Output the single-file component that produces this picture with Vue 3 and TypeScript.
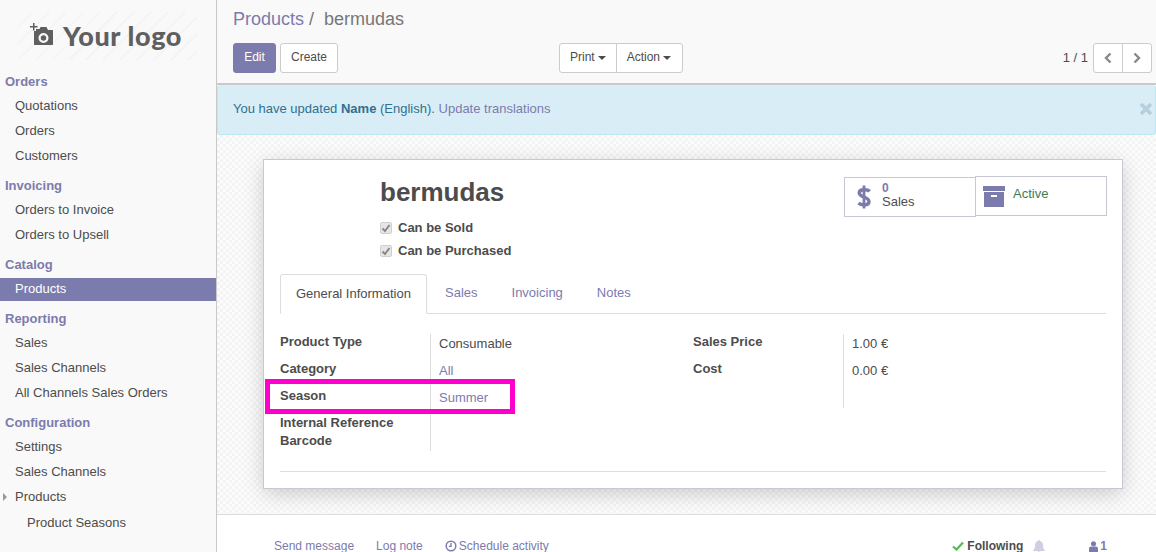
<script setup lang="ts">
interface MenuSection {
  title: string
  items: string[]
}

const sections: MenuSection[] = [
  { title: 'Orders', items: ['Quotations', 'Orders', 'Customers'] },
  { title: 'Invoicing', items: ['Orders to Invoice', 'Orders to Upsell'] },
  { title: 'Catalog', items: ['Products'] },
  { title: 'Reporting', items: ['Sales', 'Sales Channels', 'All Channels Sales Orders'] },
  { title: 'Configuration', items: ['Settings', 'Sales Channels'] }
]

const tabs = ['Sales', 'Invoicing', 'Notes']
</script>

<template>
  <div class="app">
    <aside class="sidebar">
      <div class="logo">
        <svg class="logo-icon" viewBox="0 0 23 22" width="23" height="22">
          <path d="M0 3h3V0h1.500v3h3v1.500h-3v3H3v-3H0z" fill="#5f5f5f" />
          <path fill-rule="evenodd" d="M4 8h2V6h3.500l1-2h6l1.500 3h4.500c.3 0 .5.200.5.500V21.500c0 .3-.2.500-.5.500H4.500c-.3 0-.5-.2-.5-.5zm9.500 2a5 5 0 1 0 0 10 5 5 0 0 0 0-10zm0 2.300a2.700 2.700 0 1 1 0 5.400 2.700 2.700 0 0 1 0-5.400z" fill="#5f5f5f" />
        </svg>
        <span class="logo-text">Your logo</span>
      </div>

      <nav>
        <div v-for="section in sections" :key="section.title" class="menu-section">
          <div class="menu-title">{{ section.title }}</div>
          <div
            v-for="item in section.items"
            :key="item"
            class="menu-item"
            :class="{ active: section.title === 'Catalog' }"
          >
            {{ item }}
          </div>
        </div>
        <div class="menu-item has-caret"><span class="caret-right"></span>Products</div>
        <div class="menu-item sub">Product Seasons</div>
      </nav>
    </aside>

    <main class="content">
      <header class="control-panel">
        <div class="breadcrumb">
          <a>Products</a><span class="sep">/</span><span class="current">bermudas</span>
        </div>
        <div class="toolbar">
          <div class="toolbar-left">
            <button class="btn primary">Edit</button>
            <button class="btn">Create</button>
          </div>
          <div class="btn-group">
            <button class="btn">Print<span class="caret"></span></button>
            <button class="btn action">Action<span class="caret"></span></button>
          </div>
          <div class="pager">
            <span class="pager-value">1 / 1</span>
            <div class="btn-group">
              <button class="btn icon-btn">
                <svg viewBox="0 0 10 12" width="10" height="12"><path d="M7.500 1.500 3 6l4.500 4.500" fill="none" stroke="#888" stroke-width="2.400" /></svg>
              </button>
              <button class="btn icon-btn">
                <svg viewBox="0 0 10 12" width="10" height="12"><path d="M2.500 1.500 7 6l-4.500 4.500" fill="none" stroke="#888" stroke-width="2.400" /></svg>
              </button>
            </div>
          </div>
        </div>
      </header>

      <div class="alert">
        <span>You have updated <b>Name</b> (English). <a>Update translations</a></span>
        <svg class="alert-close" viewBox="0 0 14 14" width="14" height="14"><path d="M2 2l10 10M12 2 2 12" fill="none" stroke="#b5cfdb" stroke-width="3.600" /></svg>
      </div>

      <section class="sheet-bg">
        <div class="sheet">
          <div class="head">
            <div class="title-block">
              <h1>bermudas</h1>
              <label class="check"><span class="box"><svg viewBox="0 0 10 10" width="10" height="10"><path d="M1.500 5.500 4 8l4.500-6" fill="none" stroke="#888" stroke-width="2" /></svg></span>Can be Sold</label>
              <label class="check"><span class="box"><svg viewBox="0 0 10 10" width="10" height="10"><path d="M1.500 5.500 4 8l4.500-6" fill="none" stroke="#888" stroke-width="2" /></svg></span>Can be Purchased</label>
            </div>
            <div class="stat-box">
              <div class="stat sales">
                <svg class="dollar" viewBox="0 0 14 26" width="14" height="26">
                  <path d="M12.500 7.500C11 5.500 2.200 4.500 2.200 9c0 4.500 9.800 3.500 9.800 8.500 0 4.500-8 4-10.500 1.500" fill="none" stroke="#7c7bad" stroke-width="3.400" />
                  <path d="M7 1.500v23" fill="none" stroke="#7c7bad" stroke-width="2.800" />
                </svg>
                <div class="stat-text"><b>0</b><span>Sales</span></div>
              </div>
              <div class="stat active-stat">
                <svg viewBox="0 0 22 21" width="22" height="21">
                  <path d="M0 0h22v5H0z" fill="#7c7bad" />
                  <path fill-rule="evenodd" d="M1 6h20v15H1zm7 3v2h6V9z" fill="#7c7bad" />
                </svg>
                <span class="active-label">Active</span>
              </div>
            </div>
          </div>

          <div class="tabs">
            <div class="tab current-tab">General Information</div>
            <a v-for="tab in tabs" :key="tab" class="tab">{{ tab }}</a>
          </div>

          <div class="groups">
            <div class="group left">
              <div class="row"><div class="label">Product Type</div><div class="value">Consumable</div></div>
              <div class="row"><div class="label">Category</div><div class="value link">All</div></div>
              <div class="row"><div class="label">Season</div><div class="value link">Summer</div></div>
              <div class="row short"><div class="label">Internal Reference</div><div class="value"></div></div>
              <div class="row short"><div class="label">Barcode</div><div class="value"></div></div>
              <div class="highlight"></div>
            </div>
            <div class="group right">
              <div class="row"><div class="label">Sales Price</div><div class="value">1.00 €</div></div>
              <div class="row"><div class="label">Cost</div><div class="value">0.00 €</div></div>
              <div class="row spacer"><div class="label"></div><div class="value"></div></div>
            </div>
          </div>
          <div class="rule"></div>
        </div>
      </section>

      <footer class="chatter">
        <div class="chatter-left">
          <a>Send message</a>
          <a>Log note</a>
          <a class="schedule">
            <svg viewBox="0 0 12 12" width="12" height="12"><circle cx="6" cy="6" r="4.800" fill="none" stroke="#7c7bad" stroke-width="1.500" /><path d="M6 3v3.300H3.800" fill="none" stroke="#7c7bad" stroke-width="1.300" /></svg>
            Schedule activity
          </a>
        </div>
        <div class="chatter-right">
          <span class="following">
            <svg viewBox="0 0 12 10" width="12" height="10"><path d="M1 5.500 4.500 8.500 11 1.500" fill="none" stroke="#5cb85c" stroke-width="2.300" /></svg>
            Following
          </span>
          <svg class="bell" viewBox="0 0 12 13" width="12" height="13"><path d="M6 0c.6 0 1 .4 1 1 2 .4 3 2 3 4 0 3 .5 4 2 5.500v.5H0v-.5C1.500 9 2 8 2 5c0-2 1-3.600 3-4 0-.6.4-1 1-1zM4.500 11.500h3a1.500 1.500 0 0 1-3 0z" fill="#d0cfe2" /></svg>
          <span class="followers">
            <svg viewBox="0 0 10 12" width="9" height="11"><circle cx="5" cy="3" r="2.800" fill="#7c7bad" /><path d="M0 12V8.500C0 7 1 6 2.500 6h5C9 6 10 7 10 8.500V12z" fill="#7c7bad" /></svg>
            1
          </span>
        </div>
      </footer>
    </main>
  </div>
</template>

<style>
html,
body {
  margin: 0;
  overflow: hidden;
}
</style>

<style scoped>
.app {
  display: flex;
  width: 1156px;
  height: 552px;
  overflow: hidden;
  font-family: "Liberation Sans", Arial, sans-serif;
  font-size: 13px;
  line-height: 18.57px;
  color: #4c4c4c;
  background: #fff;
}

a {
  color: #7c7bad;
}

/* sidebar */
.sidebar {
  flex: none;
  box-sizing: border-box;
  width: 217px;
  height: 552px;
  background: #f9f9f9;
  border-right: 1px solid #c8c8c8;
}

.logo {
  display: flex;
  align-items: center;
  gap: 10px;
  box-sizing: border-box;
  width: 180px;
  height: 48px;
  margin: 12px 0 9px 17px;
  padding: 0 0 0 13px;
  background: repeating-linear-gradient(135deg, #f9f9f9 0 10px, #f4f4f4 10px 12px);
}

.logo-icon {
  margin-top: -5px;
}

.logo-text {
  font-family: Lato, sans-serif;
  font-size: 27px;
  font-weight: 900;
  letter-spacing: 0.6px;
  color: #5f5f5f;
  line-height: 30px;
}

.menu-section {
  margin-bottom: 5px;
}

.menu-title {
  padding: 4px 5px 2px;
  line-height: 18px;
  font-weight: bold;
  color: #7c7bad;
}

.menu-item {
  padding: 3px 15px;
  line-height: 19px;
  color: #4c4c4c;
}

.menu-item.active {
  margin-top: 2px;
  padding-top: 1px;
  background: #7c7bad;
  color: #fff;
}

.menu-section + .menu-item {
  margin-top: -5px;
}

.has-caret {
  position: relative;
}

.caret-right {
  position: absolute;
  left: 3px;
  top: 9px;
  border-left: 4px solid #999;
  border-top: 4px solid transparent;
  border-bottom: 4px solid transparent;
}

.menu-item.sub {
  padding-top: 4px;
  padding-left: 27px;
}

/* main column */
.content {
  flex: 1;
  min-width: 0;
  display: flex;
  flex-direction: column;
}

.control-panel {
  flex: none;
  box-sizing: border-box;
  height: 85px;
  padding: 7px 4px 0 16px;
  background: #f9f9f9;
  border-bottom: 2px solid #cacaca;
}

.breadcrumb {
  height: 29px;
  margin-bottom: 7px;
  font-size: 18px;
  line-height: 24px;
}

.sep {
  margin: 0 10px 0 5px;
  color: #777;
}

.current {
  color: #777;
}

.toolbar {
  display: flex;
  align-items: center;
}

.toolbar-left {
  display: flex;
  gap: 4px;
  width: 326px;
}

.btn {
  box-sizing: border-box;
  height: 30px;
  padding: 0 10px 2px;
  border: 1px solid #ccc;
  border-radius: 3px;
  background: #fff;
  color: #4c4c4c;
  font-family: inherit;
  font-size: 12px;
}

.btn.primary {
  width: 43px;
  background: #7c7bad;
  border-color: #7c7bad;
  color: #fff;
}

.btn.action {
  padding-right: 11px;
}

.btn-group {
  display: flex;
}

.btn-group .btn:first-child {
  border-radius: 3px 0 0 3px;
}

.btn-group .btn:last-child {
  margin-left: -1px;
  border-radius: 0 3px 3px 0;
}

.caret {
  display: inline-block;
  margin-left: 3px;
  vertical-align: middle;
  border-top: 4px solid #4c4c4c;
  border-left: 4px solid transparent;
  border-right: 4px solid transparent;
}

.pager {
  display: flex;
  align-items: center;
  gap: 5px;
  margin-left: auto;
}

.pager-value {
  color: #4c4c4c;
}

.icon-btn {
  display: flex;
  align-items: center;
  justify-content: center;
  width: 30px;
  padding: 0;
}

/* alert */
.alert {
  flex: none;
  display: flex;
  align-items: center;
  justify-content: space-between;
  box-sizing: border-box;
  height: 50px;
  padding: 0 2px 2px 15px;
  background: #d9edf7;
  border: 1px solid #bce8f1;
  border-top-color: #d9edf7;
  border-radius: 3px;
  color: #31708f;
}

/* form sheet */
.sheet-bg {
  flex: none;
  box-sizing: border-box;
  height: 380px;
  padding: 24px 33px 0 46px;
  background: repeating-conic-gradient(#f4f4f4 0 25%, #fcfcfc 0 50%) 0 0 / 6px 6px;
  border-bottom: 1px solid #ddd;
}

.sheet {
  box-sizing: border-box;
  width: 860px;
  height: 330px;
  padding: 16px 16px 0 16px;
  background: #fff;
  border: 1px solid #c8c8d3;
  box-shadow: 0 5px 20px -1px rgba(0, 0, 0, 0.2);
}

.head {
  display: flex;
  justify-content: space-between;
  height: 98px;
}

.title-block {
  padding: 0 0 0 100px;
}

h1 {
  margin: -1px 0 8px;
  font-size: 26px;
  line-height: 34px;
  font-weight: bold;
  color: #4c4c4c;
}

.check {
  display: flex;
  align-items: center;
  gap: 6px;
  height: 23px;
  font-weight: bold;
}

.box {
  display: flex;
  align-items: center;
  justify-content: center;
  box-sizing: border-box;
  width: 12px;
  height: 12px;
  margin-top: -1px;
  background: #e6e6e6;
  border: 1px solid #d0d0d0;
  border-radius: 2px;
}

.stat-box {
  display: flex;
  align-items: flex-start;
  margin-right: -1px;
}

.stat {
  display: flex;
  box-sizing: border-box;
  width: 132px;
  height: 40px;
  border: 1px solid #c8c8d3;
  background: #fff;
}

.sales {
  margin-top: 1px;
  margin-right: -1px;
  align-items: center;
  padding-left: 12px;
}

.dollar {
  flex: none;
  margin-right: 11px;
}

.stat-text {
  display: flex;
  flex-direction: column;
  padding-bottom: 4px;
  line-height: 14px;
  font-size: 13px;
}

.stat-text b {
  font-size: 12px;
  color: #7c7bad;
}

.active-stat {
  position: relative;
  align-items: flex-start;
  padding: 9px 0 0 7px;
  gap: 8px;
}

.active-label {
  color: #3e7a5a;
  line-height: 16px;
}

.tabs {
  display: flex;
  height: 40px;
  box-sizing: border-box;
  border-bottom: 1px solid #ddd;
}

.tab {
  box-sizing: border-box;
  height: 40px;
  padding: 10px 17px 0;
}

.current-tab {
  width: 147px;
  padding-left: 15px;
  padding-right: 0;
  background: #fff;
  border: 1px solid #ddd;
  border-bottom-color: #fff;
  border-radius: 3px 3px 0 0;
  margin-right: 1px;
  color: #4c4c4c;
}

.groups {
  display: flex;
  margin-top: 20px;
}

.group {
  position: relative;
}

.group.left {
  width: 413px;
}

.row {
  display: flex;
  height: 27px;
}

.row.short {
  height: 18px;
}

.row.spacer {
  height: 20px;
}

.label {
  box-sizing: border-box;
  width: 151px;
  line-height: 16px;
  font-weight: bold;
  border-right: 1px solid #ddd;
}

.value {
  padding: 1px 0 0 8px;
}

.value.link {
  color: #7c7bad;
}

.highlight {
  position: absolute;
  left: -15px;
  top: 45px;
  width: 240px;
  height: 25px;
  border: 5px solid #ff00cc;
}

.rule {
  height: 1px;
  margin-top: 20px;
  background: #ddd;
}

/* chatter */
.chatter {
  flex: 1;
  display: flex;
  justify-content: space-between;
  padding: 22px 49px 0 57px;
  font-size: 12px;
  background: #fff;
}

.chatter-left {
  display: flex;
  gap: 22px;
}

.schedule {
  display: flex;
  align-items: center;
  gap: 2px;
  height: 18px;
}

.chatter-right {
  display: flex;
  align-items: center;
  height: 18px;
}

.following {
  display: flex;
  align-items: center;
  gap: 3px;
  margin-right: 1px;
  font-weight: bold;
  color: #4c4c4c;
}

.bell {
  margin-left: 9px;
}

.followers {
  display: flex;
  align-items: center;
  gap: 2px;
  margin-left: 44px;
  font-weight: bold;
  color: #7c7bad;
}
</style>
